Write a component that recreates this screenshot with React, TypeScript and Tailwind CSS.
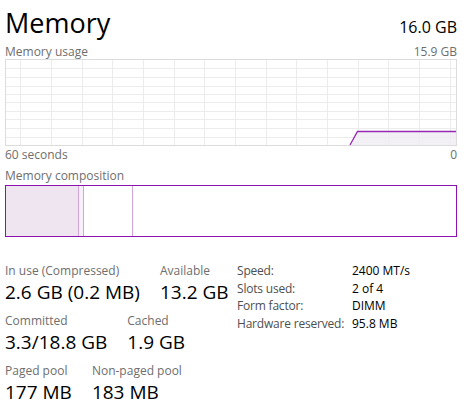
import React from 'react';

const font = { fontFamily: '"Segoe UI", "Open Sans", "Noto Sans", sans-serif' };

function UsageGraph() {
  const w = 452;
  const h = 86;
  const cols = [15, 46, 77, 107, 138, 169, 199, 230, 261, 291, 322, 353, 383, 414, 445];
  const rows = [9, 18, 27, 35, 43, 52, 60, 69, 78];
  return (
    <svg width={w} height={h + 1} className="block">
      <rect x="0.5" y="0.5" width={w - 1} height={h} fill="white" stroke="#dcdcdc" />
      {cols.map((x) => (
        <line key={x} x1={x + 0.5} y1={1} x2={x + 0.5} y2={h} stroke="#ececec" />
      ))}
      {rows.map((y) => (
        <line key={y} x1={1} y1={y + 0.5} x2={w - 1} y2={y + 0.5} stroke="#ececec" />
      ))}
      <polygon points={`345,${h} 352,72 ${w - 1},72 ${w - 1},${h}`} fill="#f1edf3" fillOpacity="0.85" />
      <polyline points={`345,${h} 352.5,72.5 ${w - 1},72.5`} fill="none" stroke="#9528b4" strokeWidth="1.3" />
    </svg>
  );
}

function Stat({ label, value }: { label: string; value: string }) {
  return (
    <div className="flex flex-col">
      <span className="text-[12px] leading-[16px] text-[#6e6e6e]">{label}</span>
      <span className="text-[19px] leading-[26px] text-black">{value}</span>
    </div>
  );
}

export default function App() {
  const specs = [
    ['Speed:', '2400 MT/s'],
    ['Slots used:', '2 of 4'],
    ['Form factor:', 'DIMM'],
    ['Hardware reserved:', '95.8 MB'],
  ];

  return (
    <div className="w-[470px] h-[415px] bg-white overflow-hidden px-[5px] pr-[13px]" style={font}>
      <div className="flex justify-between items-end h-[40px]">
        <span className="text-[27px] leading-[34px] text-black">Memory</span>
        <span className="text-[16px] leading-[22px] text-black mb-[2px]">16.0 GB</span>
      </div>
      <div className="flex justify-between items-end text-[12px] leading-[18px] text-[#6e6e6e] h-[19px] pb-[0px] mt-[2px] mb-[-2px]">
        <span>Memory usage</span>
        <span>15.9 GB</span>
      </div>
      <UsageGraph />
      <div className="flex justify-between text-[12px] leading-[18px] text-[#6e6e6e]">
        <span>60 seconds</span>
        <span>0</span>
      </div>
      <div className="text-[12px] leading-[20px] text-[#6e6e6e] mt-[2px] h-[19px]">Memory composition</div>
      <div className="flex h-[52px] border border-[#8b12ae]">
        <div className="w-[73px] bg-[#eee5f0] border-r border-[#d2a6dc]" />
        <div className="w-[5px] bg-[#f6eff8] border-r border-[#d2a6dc]" />
        <div className="w-[49px] border-r border-[#d2a6dc]" />
        <div className="flex-1" />
      </div>

      <div className="flex mt-[26px]">
        <div className="flex flex-col gap-[8px] w-[232px]">
          <div className="flex gap-5">
            <Stat label="In use (Compressed)" value="2.6 GB (0.2 MB)" />
            <Stat label="Available" value="13.2 GB" />
          </div>
          <div className="flex gap-5">
            <Stat label="Committed" value="3.3/18.8 GB" />
            <Stat label="Cached" value="1.9 GB" />
          </div>
          <div className="flex gap-5">
            <Stat label="Paged pool" value="177 MB" />
            <Stat label="Non-paged pool" value="183 MB" />
          </div>
        </div>
        <div className="flex flex-col text-[12px] leading-[17.5px] -mt-[1px]">
          {specs.map(([k, v]) => (
            <div key={k} className="flex">
              <span className="w-[115px] text-[#4f4f4f] tracking-[-0.2px]">{k}</span>
              <span className="text-black">{v}</span>
            </div>
          ))}
        </div>
      </div>
    </div>
  );
}
